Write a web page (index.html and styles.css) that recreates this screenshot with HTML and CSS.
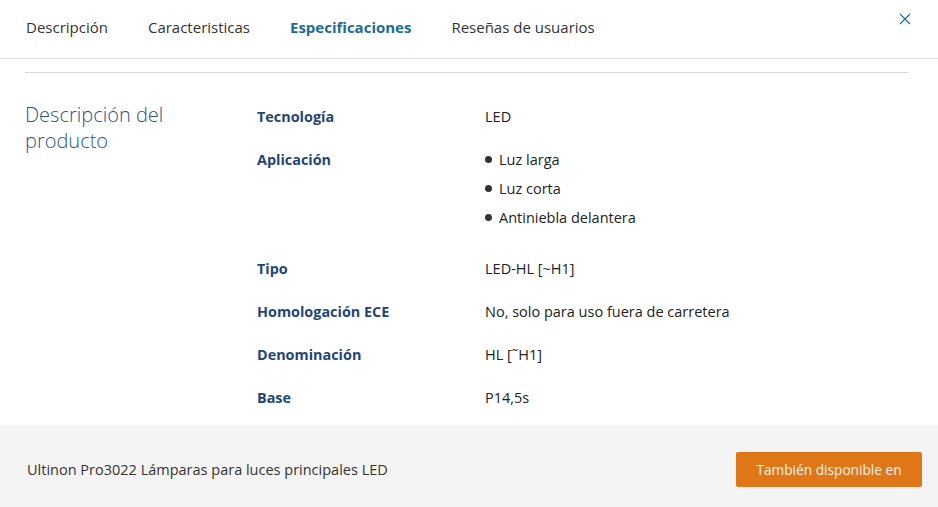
FILE: index.html
```html
<!DOCTYPE html>
<html lang="es">
<head>
  <meta charset="UTF-8">
  <meta name="viewport" content="width=device-width, initial-scale=1.0">
  <title>Especificaciones</title>
  <link rel="stylesheet" href="styles.css">
</head>
<body>
<div class="tabs">
  <a class="tab">Descripción</a>
  <a class="tab">Caracteristicas</a>
  <a class="tab active">Especificaciones</a>
  <a class="tab">Reseñas de usuarios</a>
  <button class="close" aria-label="Cerrar">
    <svg width="12" height="12" viewBox="0 0 12 12"><path d="M1 1 L11 11 M11 1 L1 11" stroke="#2a6f9e" stroke-width="1.3" fill="none"/></svg>
  </button>
</div>

<div class="content">
  <div class="divider"></div>
  <div class="section">
    <h2 class="section-title">Descripción del producto</h2>
    <div class="specs">
      <div class="row">
        <div class="label">Tecnología</div>
        <div class="value">LED</div>
      </div>
      <div class="row">
        <div class="label">Aplicación</div>
        <ul class="value list">
          <li>Luz larga</li>
          <li>Luz corta</li>
          <li>Antiniebla delantera</li>
        </ul>
      </div>
      <div class="row">
        <div class="label">Tipo</div>
        <div class="value">LED-HL [~H1]</div>
      </div>
      <div class="row">
        <div class="label">Homologación ECE</div>
        <div class="value">No, solo para uso fuera de carretera</div>
      </div>
      <div class="row">
        <div class="label">Denominación</div>
        <div class="value">HL [˜H1]</div>
      </div>
      <div class="row">
        <div class="label">Base</div>
        <div class="value">P14,5s</div>
      </div>
    </div>
  </div>
</div>

<div class="footer">
  <span class="product">Ultinon Pro3022 Lámparas para luces principales LED</span>
  <button class="button">También disponible en</button>
</div>
</body>
</html>
```

FILE: styles.css
```css
body {
  margin: 0;
  font-family: "Open Sans", "Noto Sans", Arial, sans-serif;
  color: #222;
  background-color: white;
  height: 507px;
  display: flex;
  flex-direction: column;
  overflow: hidden;
}
.tabs {
  display: flex;
  align-items: center;
  gap: 40px;
  height: 58px;
  padding: 0 25px 0 26px;
  border-bottom: 1px solid #e2e2e2;
  flex-shrink: 0;
}
.tab {
  font-size: 15px;
  color: #333;
  padding-bottom: 5px;
}
.tab.active {
  font-weight: 700;
  color: #1d6b98;
}
.close {
  margin-left: auto;
  margin-right: 2px;
  margin-bottom: 20px;
  border: none;
  background: none;
  padding: 0;
  cursor: pointer;
  line-height: 0;
}
.content {
  flex: 1;
  overflow: hidden;
  padding: 0 30px 0 25px;
}
.divider {
  margin-top: 13px;
  border-top: 1px solid #d8d8d8;
}
.section {
  display: flex;
  padding-top: 29px;
}
.section-title {
  width: 172px;
  padding-right: 60px;
  margin: 0;
  font-size: 20px;
  font-weight: 300;
  line-height: 26px;
  color: #2a5685;
}
.specs {
  flex: 1;
}
.row {
  display: flex;
  padding-bottom: 14px;
}
.label {
  width: 228px;
  font-size: 14.4px;
  font-weight: 700;
  line-height: 29px;
  color: #1f4679;
}
.value {
  font-size: 14.5px;
  line-height: 29px;
  color: #222;
}
.list {
  margin: 0 0 8px 0;
  padding: 0;
  list-style: none;
}
.list li {
  display: flex;
  align-items: center;
}
.list li::before {
  content: "";
  width: 7px;
  height: 7px;
  border-radius: 50%;
  background-color: #333;
  margin-right: 7px;
}
.footer {
  height: 82px;
  flex-shrink: 0;
  background-color: #f4f4f4;
  display: flex;
  align-items: center;
  justify-content: space-between;
  padding: 0 16px 0 27px;
}
.product {
  font-size: 14.5px;
  color: #333;
  padding-top: 6px;
}
.button {
  font-family: inherit;
  font-size: 13.7px;
  color: #fff4e8;
  background-color: #df7617;
  border: none;
  border-radius: 2px;
  width: 186px;
  height: 35px;
  margin-top: 6px;
  cursor: pointer;
}
```
